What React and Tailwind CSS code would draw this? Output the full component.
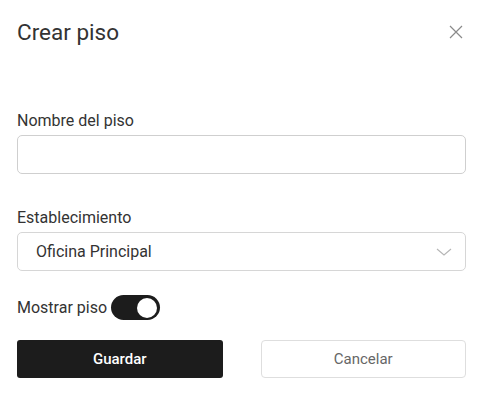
import React, { useState } from 'react';

const Field = ({ label, children, className = '' }) => (
  <div className={className}>
    <label className="block text-[16px] leading-[18px] text-[#333]">{label}</label>
    <div className="mt-[5px]">{children}</div>
  </div>
);

const App = () => {
  const [visible, setVisible] = useState(true);

  return (
    <div
      className="w-[483px] h-[407px] bg-white px-[17px] pt-[17px] text-[#333]"
      style={{ fontFamily: 'Roboto, "Noto Sans", sans-serif' }}
    >
      {/* Header */}
      <div className="flex h-[30px] items-center justify-between">
        <h2 className="text-[22.5px] leading-[26px] font-normal text-[#333]">Crear piso</h2>
        <button className="mr-[3px] text-[#8a8a8a]" aria-label="Cerrar">
          <svg width="14" height="14" viewBox="0 0 14 14" fill="none" stroke="currentColor" strokeWidth="1.2">
            <path d="M1 1L13 13M13 1L1 13" />
          </svg>
        </button>
      </div>

      <Field label="Nombre del piso" className="mt-[65px]">
        <input
          type="text"
          className="block h-[39px] w-full rounded-[5px] border border-[#cfcfcf] px-[18px] text-[16px] outline-none"
        />
      </Field>

      <Field label="Establecimiento" className="mt-[35px]">
        <div className="flex h-[39px] w-full items-center justify-between rounded-[5px] border border-[#d6d6d6] pl-[18px] pr-[13px]">
          <span className="text-[16px] text-[#333]">Oficina Principal</span>
          <svg width="16" height="8" viewBox="0 0 16 8" fill="none" stroke="#b5b5b5" strokeWidth="1.1">
            <path d="M1 1L8 7L15 1" />
          </svg>
        </div>
      </Field>

      {/* Toggle */}
      <div className="mt-[24px] flex h-[25px] items-center gap-[4px]">
        <span className="text-[16px] text-[#333]">Mostrar piso</span>
        <button
          onClick={() => setVisible(!visible)}
          className={`flex h-[25px] w-[49px] items-center rounded-full p-[3px] ${visible ? 'justify-end bg-[#1c1c1c]' : 'justify-start bg-[#ccc]'}`}
        >
          <span className="block h-[20px] w-[20px] rounded-full bg-white" />
        </button>
      </div>

      {/* Actions */}
      <div className="mt-[20px] grid grid-cols-2 gap-[38px]">
        <button className="h-[38px] rounded-[3px] bg-[#1c1c1c] text-[15px] font-medium text-white">
          Guardar
        </button>
        <button className="h-[38px] rounded-[4px] border border-[#dedede] bg-white text-[15px] text-[#666]">
          Cancelar
        </button>
      </div>
    </div>
  );
};

export default App;
